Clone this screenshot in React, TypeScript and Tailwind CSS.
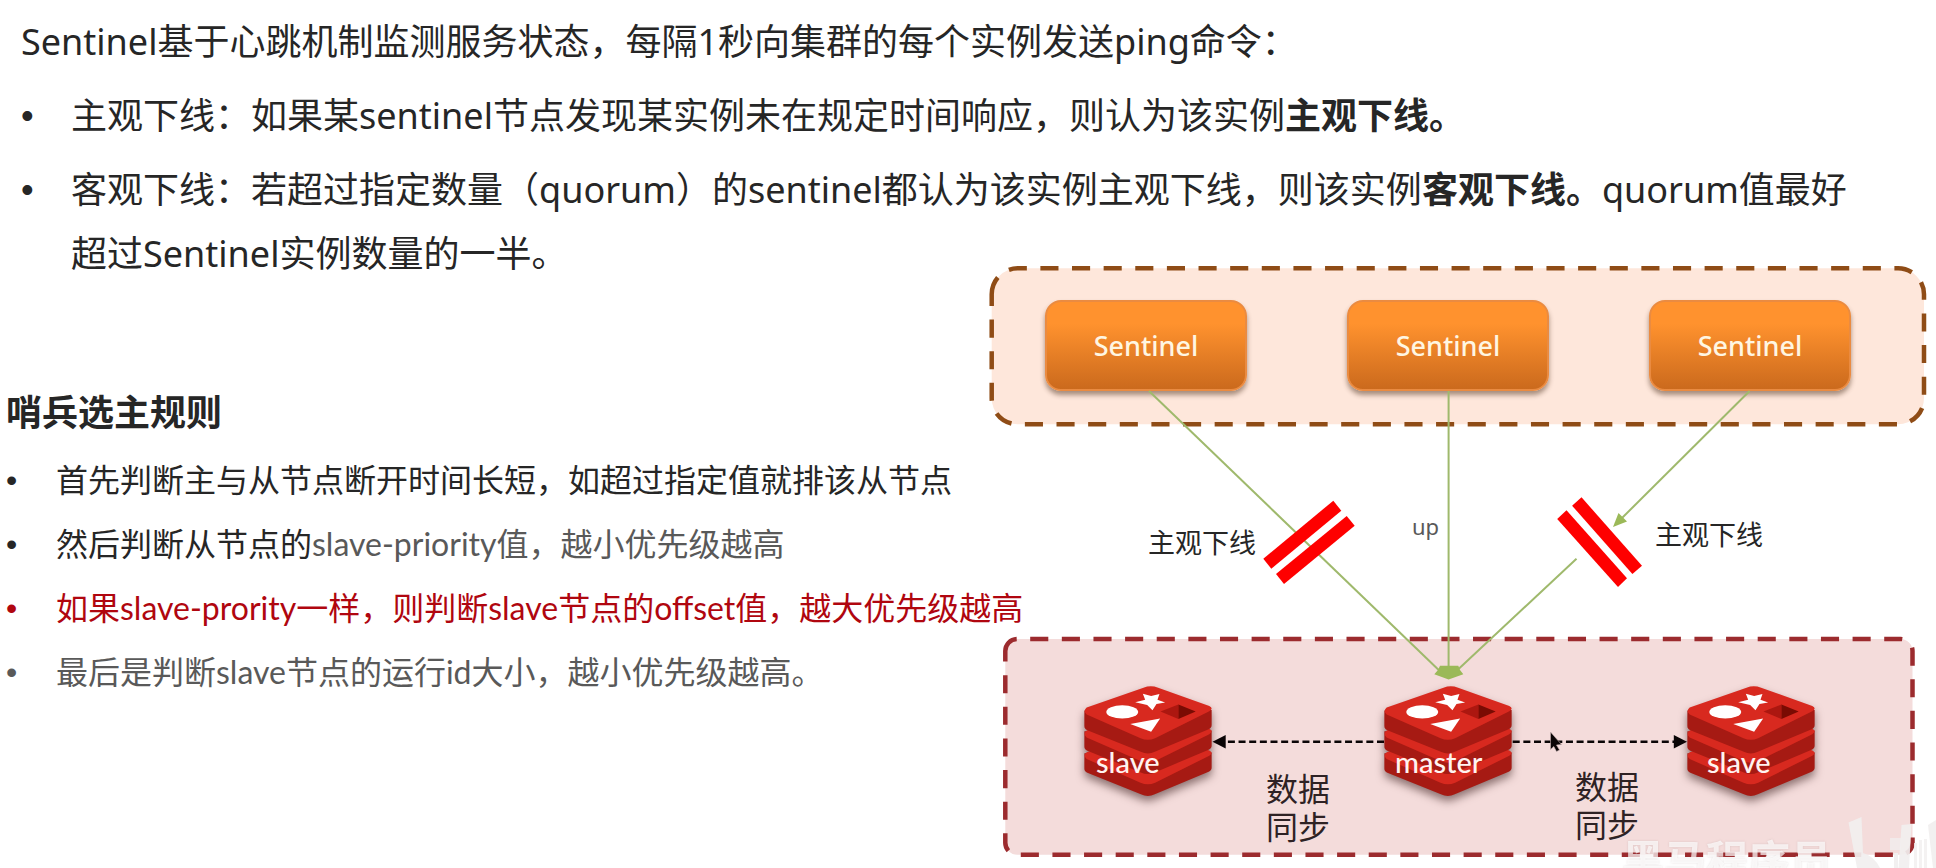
import type { ReactNode } from "react";

function Item({ children, className = "" }: { children: ReactNode; className?: string }) {
  return (
    <li className={`flex ${className}`}>
      <span aria-hidden="true" className="w-[50px] shrink-0 font-['Liberation_Sans',sans-serif]">
        •
      </span>
      <span>{children}</span>
    </li>
  );
}

function SentinelNode() {
  return (
    <div className="flex h-[91px] w-[202px] items-center justify-center rounded-2xl border-2 border-[#ea8b41] bg-linear-to-b from-[#ff922e] from-25% to-[#cb6a1d] pt-0.5 text-[27px] font-medium text-[#fff6e2] shadow-[0_4px_5px_rgba(60,30,10,0.45)]">
      Sentinel
    </div>
  );
}

const stackLayers = [
  { side: 128, face: 134 },
  { side: 62, face: 69 },
  { side: 0, face: 0 },
];

function RedisLogo() {
  return (
    <svg viewBox="0 0 383 334" className="h-[111px] w-32 overflow-visible drop-shadow-[0_5px_4px_rgba(40,10,10,0.5)]" aria-hidden="true">
      {stackLayers.map(({ side, face }) => (
        <g key={side}>
          <path
            transform={`translate(0 ${side})`}
            d="M0 74V120Q0 129 9 133L170 198Q191 208 212 198L374 130Q383 126 383 117V72Z"
            fill="#a61a13"
          />
          <path
            transform={`translate(0 ${face})`}
            d="M7 65L178 5Q200 -3 222 5L376 60Q390 67 376 76L213 157Q191 167 169 157L7 86Q-5 75 7 65Z"
            fill="#d8291f"
          />
        </g>
      ))}
      <ellipse cx="114" cy="78" rx="48" ry="20" fill="#fff" />
      <path d="M176 23L201 30L226 24L220 41L243 50L217 54L205 73L189 57L153 49L183 41Z" fill="#fff" />
      <path d="M138 114L228 98L201 138Z" fill="#fff" />
      <path d="M229 77L283 56L283 99Z" fill="#ac1710" />
      <path d="M283 56L335 77L283 99Z" fill="#7a0b03" />
    </svg>
  );
}

function DiagramLines() {
  return (
    <svg viewBox="968 266 968 602" className="absolute inset-0 h-full w-full" aria-hidden="true">
      <path
        d="M991.7 294.3A26 26 0 0 1 1017.7 268.3H1898A26 26 0 0 1 1924 294.3V398.3A26 26 0 0 1 1898 424.3H1017.7A26 26 0 0 1 991.7 398.3Z"
        fill="#fee7db"
        stroke="#8f4c16"
        strokeWidth="4.5"
        strokeDasharray="18.1 13.53"
      />
      <path
        d="M1005.3 651A12 12 0 0 1 1017.3 639H1900.5A12 12 0 0 1 1912.5 651V842.7A12 12 0 0 1 1900.5 854.7H1017.3A12 12 0 0 1 1005.3 842.7Z"
        fill="#f4dcdb"
        stroke="#9c2b2e"
        strokeWidth="4.5"
        strokeDasharray="18.1 13.53"
      />
    </svg>
  );
}

function DiagramLinks() {
  return (
    <svg viewBox="968 266 968 602" className="absolute inset-0 h-full w-full" aria-hidden="true">
      <g stroke="#9fb96c" strokeWidth="2">
        <path d="M1149 391L1446 677" />
        <path d="M1448.6 391V676" />
        <path d="M1749.6 391L1620 520" />
        <path d="M1576.5 558.7L1450 677" />
      </g>
      <g fill="#9bb958">
        <path d="M1434.3 674.3L1438 670L1440 665.7H1458.3L1460 670L1463.3 674.3L1448.6 679.5Z" />
        <path d="M1613 527L1618.5 513L1627 521.5Z" />
      </g>
      <g fill="#fe0000">
        <path d="M1333.3 500.7L1341.3 510.7L1271.3 568.7L1263.3 558.7Z" />
        <path d="M1346.7 516L1354.7 525.7L1284 584L1276 574Z" />
        <path d="M1581.5 497.3L1642 565.7L1632.4 574L1572.1 505.7Z" />
        <path d="M1566.5 510.3L1627 578.3L1618 587L1557.2 519Z" />
      </g>
      <g stroke="#0a0506" strokeWidth="2.4" strokeDasharray="7 3.65">
        <path d="M1384 741.7H1225" />
        <path d="M1512.7 741.7H1674" />
      </g>
      <g fill="#0a0506">
        <path d="M1212.5 741.7L1225.7 735V748.4Z" />
        <path d="M1687 741.7L1673.8 735V748.4Z" />
      </g>
      <path
        d="M1550.5 732L1561.5 744.5L1556.5 745L1559.5 750L1556.5 751.5L1553.8 746.5L1550.5 749.5Z"
        fill="#0a0506"
        stroke="#c9b4b4"
        strokeWidth="0.6"
      />
    </svg>
  );
}

function Skyline() {
  return (
    <svg viewBox="1836 810 100 58" className="absolute right-0 bottom-0 h-[58px] w-[100px]" aria-hidden="true">
      <g fill="#f1efef" fillOpacity="0.92">
        <path d="M1848.5 822.5L1861.5 817L1863 853Q1874 856 1880 868H1857Z" />
        <path d="M1901.5 825L1911.5 824L1909 868H1898.5Z" />
        <path d="M1928 825L1936 820V868H1933Z" />
        <path d="M1890 838H1901V850H1890Z" fillOpacity="0.75" />
        <path d="M1894 853H1898V868H1894Z" />
        <path d="M1914 843H1917V868H1914ZM1919 840H1922V868H1919ZM1924 839H1927V868H1924Z" fillOpacity="0.8" />
      </g>
    </svg>
  );
}

export default function App() {
  return (
    <main
      lang="zh-CN"
      className="min-h-screen overflow-hidden bg-white font-['Noto_Sans','Noto_Sans_CJK_SC',sans-serif] text-[#262626]"
    >
      <section className="flex flex-col gap-2.5 pt-2.5 pr-16 pl-[21px] text-4xl/[64px]">
        <p>Sentinel基于心跳机制监测服务状态，每隔1秒向集群的每个实例发送ping命令：</p>
        <ul className="flex flex-col gap-2.5">
          <Item>
            主观下线：如果某sentinel节点发现某实例未在规定时间响应，则认为该实例<strong>主观下线。</strong>
          </Item>
          <Item>
            客观下线：若超过指定数量（quorum）的sentinel都认为该实例主观下线，则该实例
            <strong>客观下线。</strong>quorum值最好超过Sentinel实例数量的一半。
          </Item>
        </ul>
      </section>

      <div className="-mt-5 flex">
        <section className="relative z-10 min-w-0 flex-1 pt-[114px] pl-1.5 font-['Lato','Noto_Sans_CJK_SC',sans-serif] whitespace-nowrap">
          <h2 className="mb-1 text-4xl/[64px] font-bold">哨兵选主规则</h2>
          <ul className="text-[32px]/[64px]">
            <Item>首先判断主与从节点断开时间长短，如超过指定值就排该从节点</Item>
            <Item>
              然后判断从节点的<span className="text-[#595959]">slave-priority值，越小优先级越高</span>
            </Item>
            <Item className="text-[#b0060f]">如果slave-prority一样，则判断slave节点的offset值，越大优先级越高</Item>
            <Item className="text-[#595959]">最后是判断slave节点的运行id大小，越小优先级越高。</Item>
          </ul>
        </section>

        <section className="relative h-[602px] w-[968px] shrink-0 overflow-hidden">
          <DiagramLines />
          <div className="relative flex gap-[100px] pt-[34px] pl-[77px]">
            <SentinelNode />
            <SentinelNode />
            <SentinelNode />
          </div>
          <DiagramLinks />

          <span className="absolute top-[257px] left-[180px] text-[27px]/[40px]">主观下线</span>
          <span className="absolute top-[249px] left-[687px] text-[27px]/[40px]">主观下线</span>
          <span className="absolute top-[240px] left-[444px] text-[22px]/[40px] text-[#595959]">up</span>

          <div className="absolute top-[420px] left-[116px]">
            <RedisLogo />
          </div>
          <div className="absolute top-[420px] left-[416px]">
            <RedisLogo />
          </div>
          <div className="absolute top-[420px] left-[719px]">
            <RedisLogo />
          </div>
          <span className="absolute top-[476px] left-[128px] font-['Lato',sans-serif] text-[29px]/[40px] font-medium text-[#fff3f0]">
            slave
          </span>
          <span className="absolute top-[476px] left-[427px] font-['Lato',sans-serif] text-[29px]/[40px] font-medium text-[#fff3f0]">
            master
          </span>
          <span className="absolute top-[476px] left-[739px] font-['Lato',sans-serif] text-[29px]/[40px] font-medium text-[#fff3f0]">
            slave
          </span>

          <span className="absolute top-[504px] left-[298px] w-16 text-[32px]/[38px] text-[#2e2224]">数据同步</span>
          <span className="absolute top-[502px] left-[607px] w-16 text-[32px]/[38px] text-[#2e2224]">数据同步</span>

          <span className="absolute top-[570px] left-[654px] text-[42px]/[48px] font-bold whitespace-nowrap text-white/70 drop-shadow-[0_0_1px_rgba(120,90,90,0.25)]">
            黑马程序员
          </span>
          <Skyline />
        </section>
      </div>
    </main>
  );
}
